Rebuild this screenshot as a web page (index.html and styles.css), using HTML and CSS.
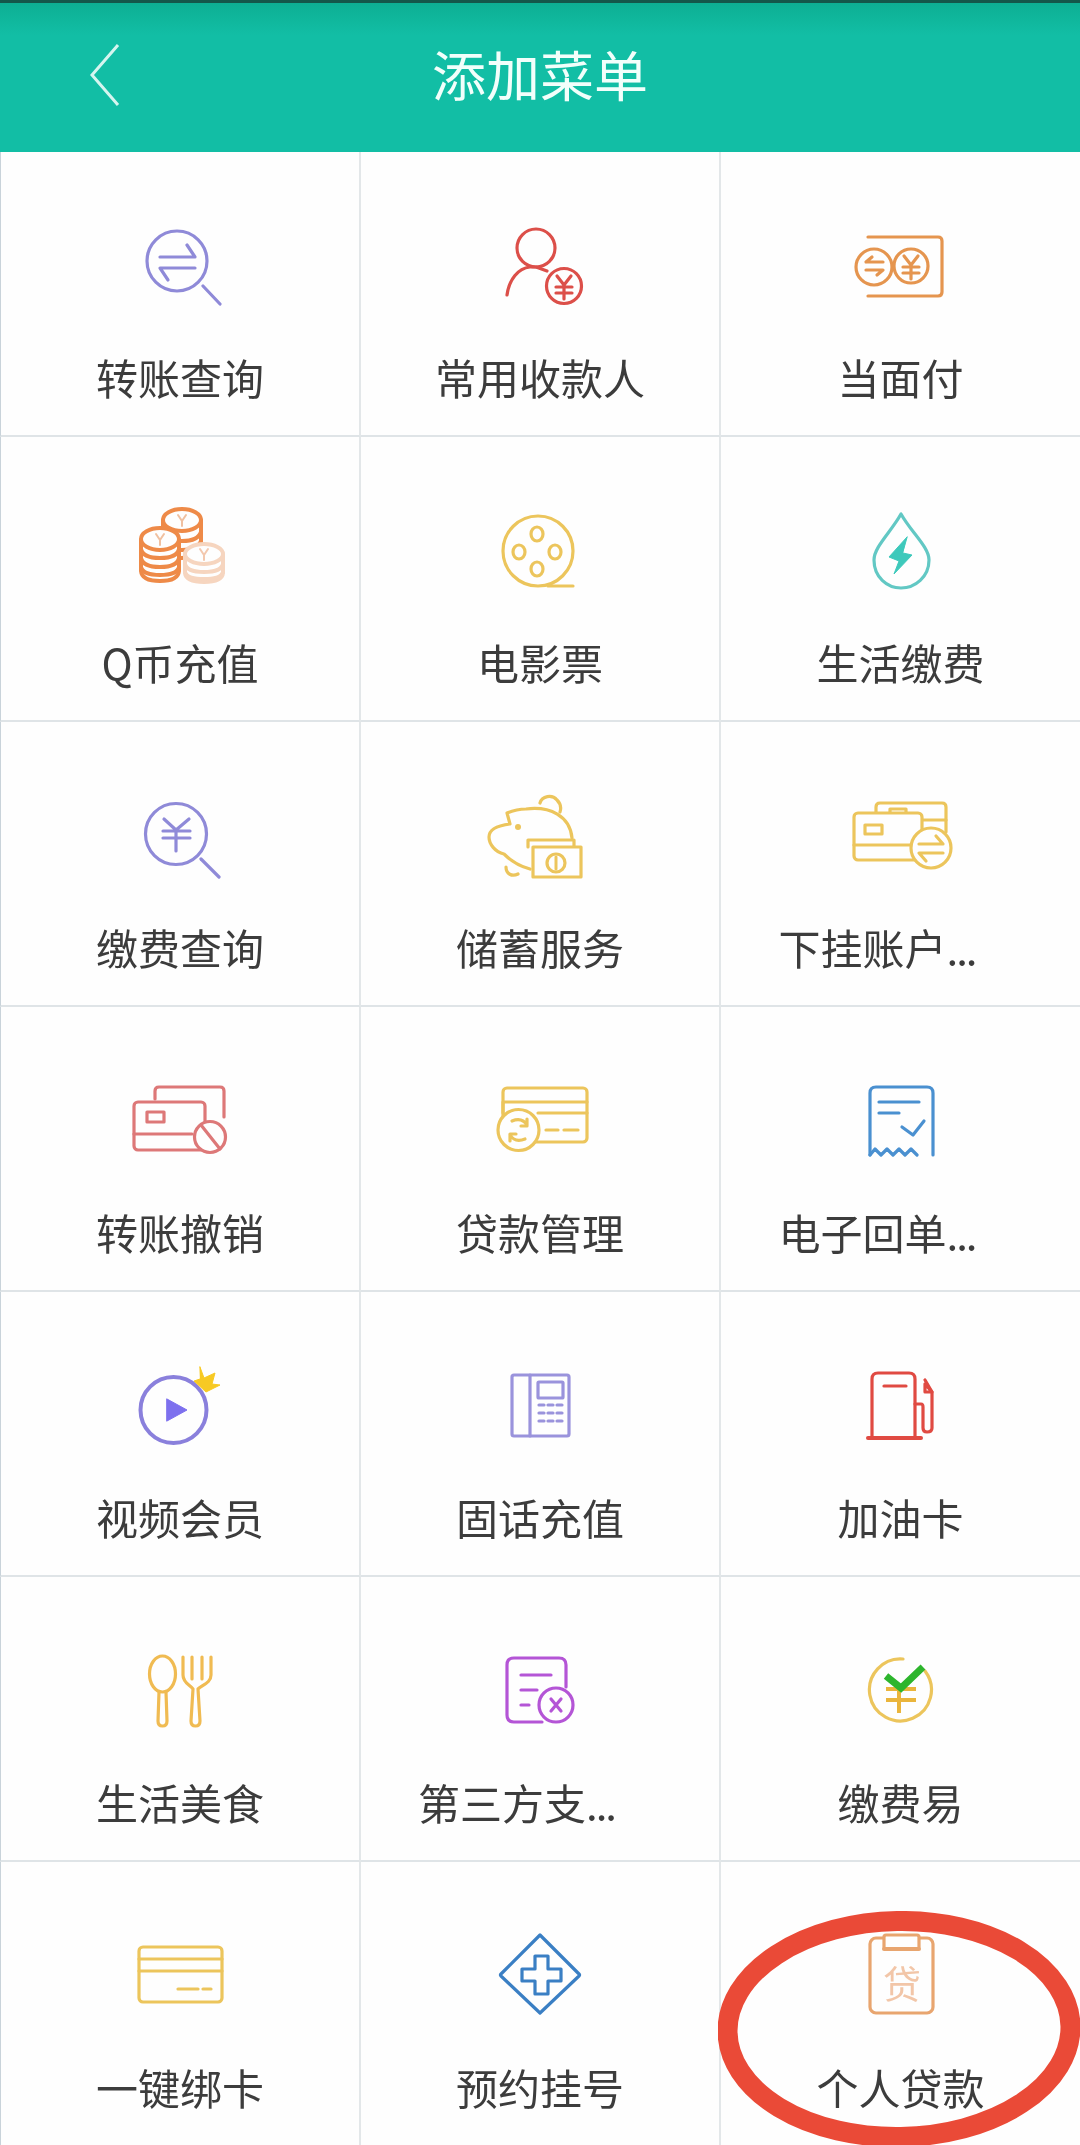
FILE: index.html
```html
<!DOCTYPE html>
<html lang="zh">
<head>
<meta charset="utf-8">
<title>添加菜单</title>
<link rel="stylesheet" href="styles.css">
</head>
<body>
<div class="page">
  <header class="bar">
    <div class="bar-left">
      <svg class="back" viewBox="0 0 30 62"><path d="M28 1 L2 31 L28 61"/></svg>
    </div>
    <h1 class="title">添加菜单</h1>
    <div></div>
  </header>
  <main class="grid">
    <div class="cell">
      <svg class="ic violet" viewBox="0 0 120 110"><circle cx="57" cy="49" r="30"/><path d="M83 74 L100 92"/><path d="M40 45 H75 L67 33"/><path d="M75 56 H40 L48 68"/></svg>
      <div class="label">转账查询</div>
    </div>
    <div class="cell">
      <svg class="ic red" viewBox="0 0 120 110"><circle cx="56" cy="36" r="19"/><path d="M27 83 C29 68 38 56 50 55 H56 L67 59"/><circle cx="84" cy="74" r="17.5"/><path d="M77 64 L84 73 L91 64 M76 75 H92 M76 81 H92 M84 73 V87"/></svg>
      <div class="label">常用收款人</div>
    </div>
    <div class="cell">
      <svg class="ic orange" viewBox="0 0 120 110"><path d="M27 25 H97 Q101 25 101 29 V80 Q101 84 97 84 H27"/><circle class="solid" cx="33" cy="55" r="18"/><circle class="solid" cx="70" cy="54" r="17"/><path d="M25 50 H42 M31 45 L25 50 M25 58 H42 L36 63"/><path d="M63 44 L70 53 L77 44 M62 55 H78 M62 61 H78 M70 53 V67"/></svg>
      <div class="label">当面付</div>
    </div>

    <div class="cell">
      <svg class="ic coin" viewBox="0 0 120 110">
        <path class="thick" d="M43 23 V60 M81 23 V60 M43 35 Q46 44 62 44 Q78 44 81 35 M43 44 Q46 53 62 53 Q78 53 81 44 M50 60 Q66 64 81 54"/>
        <ellipse class="solid thick" cx="62" cy="23" rx="19" ry="11"/>
        <path class="fine" d="M58 18 L62 24 L66 18 M62 24 V29"/>
        <path class="solid thick" d="M21 43 V74 Q22 84 40 84 Q58 84 59 74 V43 Z"/>
        <path class="thick" d="M21 52 Q23 61 40 61 Q57 61 59 52 M21 61 Q23 70 40 70 Q57 70 59 61 M21 70 Q23 78 40 78 Q57 78 59 70"/>
        <ellipse class="solid thick" cx="40" cy="42" rx="19" ry="11"/>
        <path class="fine" d="M36 37 L40 43 L44 37 M40 43 V48"/>
        <g class="pale">
          <path class="solid thick" d="M65 58 V76 Q66 85 84 85 Q102 85 103 76 V58 Z"/>
          <path class="thick" d="M65 67 Q67 75 84 75 Q101 75 103 67 M65 75 Q67 82 84 82 Q101 82 103 75"/>
          <ellipse class="solid thick" cx="84" cy="57" rx="19" ry="10"/>
          <path class="fine" d="M80 52 L84 58 L88 52 M84 58 V63"/>
        </g>
      </svg>
      <div class="label">Q币充值</div>
    </div>
    <div class="cell">
      <svg class="ic gold" viewBox="0 0 120 110"><circle cx="58" cy="54" r="35"/><path d="M68 89 H93"/><ellipse cx="57" cy="37" rx="6" ry="7"/><ellipse cx="39" cy="55" rx="6" ry="7"/><ellipse cx="75" cy="55" rx="6" ry="7"/><ellipse cx="57" cy="72" rx="6" ry="7"/></svg>
      <div class="label">电影票</div>
    </div>
    <div class="cell">
      <svg class="ic teal" viewBox="0 0 120 110"><path d="M60 17 C50 35 33 50 33 63 C33 80 46 91 60 91 C74 91 88 80 88 63 C88 50 70 35 60 17 Z"/><polygon class="bolt" points="66,40 48,60 58,64 53,77 71,58 62,56"/></svg>
      <div class="label">生活缴费</div>
    </div>

    <div class="cell">
      <svg class="ic violet" viewBox="0 0 120 110"><circle cx="56" cy="52" r="30.5"/><path d="M81 77 L99 95"/><path d="M44 37 L56 48 L69 37 M43 49 H70 M43 56 H70 M56 48 V69"/></svg>
      <div class="label">缴费查询</div>
    </div>
    <div class="cell">
      <svg class="ic gold" viewBox="0 0 120 110"><path d="M60 21 C62 14 72 12 77 18 C81 22 81 27 80 30"/><path d="M92 56 C90 34 70 24 46 27 C38 27 32 29 27 31 L30 42 C22 43 9 46 9 55 C9 62 15 70 24 72 C30 78 38 84 50 87"/><path d="M26 85 C26 92 32 95 38 92"/><circle class="dot" cx="38" cy="45" r="3"/><path class="solid" d="M48 65 V58 H94 V65"/><rect class="solid" x="53" y="65" width="48" height="30"/><circle cx="76" cy="81" r="9"/><path class="bolt" d="M76 75 V87"/></svg>
      <div class="label">储蓄服务</div>
    </div>
    <div class="cell">
      <svg class="ic gold" viewBox="0 0 120 110"><path d="M35 31 V25 Q35 21 39 21 H101 Q105 21 105 25 V50"/><path d="M81 38 H105"/><rect x="49" y="27" width="16" height="5"/><rect class="solid" x="13" y="31" width="68" height="47" rx="4"/><rect x="24" y="43" width="17" height="9"/><path d="M13 63 H72"/><circle class="solid" cx="90" cy="66" r="20"/><path d="M78 62 H102 L95 54 M102 71 H78 L85 79"/></svg>
      <div class="label trunc">下挂账户<span class="dots">...</span></div>
    </div>

    <div class="cell">
      <svg class="ic rose" viewBox="0 0 120 110"><path d="M35 32 V24 Q35 20 39 20 H100 Q104 20 104 24 V50"/><rect class="solid" x="14" y="35" width="71" height="48" rx="4"/><rect x="27" y="45" width="17" height="10"/><path d="M14 67 H72"/><circle class="solid" cx="90" cy="70" r="15.5"/><path d="M81 58 L100 82"/></svg>
      <div class="label">转账撤销</div>
    </div>
    <div class="cell">
      <svg class="ic gold" viewBox="0 0 120 110"><rect x="23" y="21" width="84" height="54" rx="4"/><path d="M23 35 H107 M58 46 H107 M23 35 V46"/><circle class="solid" cx="38.5" cy="63" r="20.5"/><path d="M66 63 H78 M84 63 H98"/><path d="M32 54 Q42 50 47 58 M47 52 V59 H41 M45 72 Q35 76 30 68 M30 74 V67 H36"/></svg>
      <div class="label">贷款管理</div>
    </div>
    <div class="cell">
      <svg class="ic blue" viewBox="0 0 120 110"><path d="M29 88 V26 Q29 20 35 20 H86 Q92 20 92 26 V88"/><path d="M29 88 L34 82 L40 88 L46 82 L52 88 L58 82 L64 88 L70 82 L76 88"/><path d="M38 35 H78 M38 46 H58"/><path d="M61 60 L72 68 L83 54"/></svg>
      <div class="label trunc">电子回单<span class="dots">...</span></div>
    </div>

    <div class="cell">
      <svg class="ic purple" viewBox="0 0 120 110"><circle class="wide" cx="53.5" cy="58" r="33"/><polygon class="play" points="47,47 67,58 47,69"/><polygon class="crown" points="80,15 84,26 95,21 92,32 100,33 86,40 74,29 80,27"/></svg>
      <div class="label">视频会员</div>
    </div>
    <div class="cell">
      <svg class="ic lilac" viewBox="0 0 120 110"><rect x="32" y="23" width="57" height="61" rx="2"/><path d="M50 23 V84"/><rect x="58" y="30" width="25" height="16" rx="1"/><path d="M59 53 H64 M68 53 H73 M77 53 H82 M59 61 H64 M68 61 H73 M77 61 H82 M59 69 H64 M68 69 H73 M77 69 H82"/></svg>
      <div class="label">固话充值</div>
    </div>
    <div class="cell">
      <svg class="ic pump" viewBox="0 0 120 110"><path d="M31 86 V27 Q31 21 37 21 H68 Q74 21 74 27 V86"/><path class="wide" d="M27 86 H80"/><path d="M43 34 H65"/><path d="M74 52 H80 Q82 52 82 55 V76 Q82 80 86 80 Q91 80 91 76 V40 L84 28"/><path d="M84 40 L91 40 L84 32 Z"/></svg>
      <div class="label">加油卡</div>
    </div>

    <div class="cell">
      <svg class="ic amber" viewBox="0 0 120 110"><ellipse cx="42.5" cy="37" rx="13" ry="18"/><path d="M39 55 L38 84 Q38 89 42.5 89 Q47 89 47 84 L46 55"/><path d="M63 20 V38 C63 46 70 48 73 52 L71 84 Q71 89 75.5 89 Q80 89 80 84 L78 52 C82 48 91 46 91 38 V20"/><path d="M72 20 V42 M82 20 V42"/></svg>
      <div class="label">生活美食</div>
    </div>
    <div class="cell">
      <svg class="ic magenta" viewBox="0 0 120 110"><path d="M62 85 H34 Q27 85 27 78 V28 Q27 21 34 21 H79 Q86 21 86 28 V50"/><circle cx="76" cy="68" r="17"/><path d="M41 38 H71 M41 53 H57 M41 68 H49"/><path d="M71 62 L81 74 M81 62 L71 74"/></svg>
      <div class="label trunc">第三方支<span class="dots">...</span></div>
    </div>
    <div class="cell">
      <svg class="ic gold" viewBox="0 0 120 110"><path d="M62 22 A31 31 0 1 0 84 34"/><path class="wide2" d="M45 52 H75 M45 63 H75 M58 50 V76"/><path class="tick" d="M45 39 L60 51 L82 30"/></svg>
      <div class="label">缴费易</div>
    </div>

    <div class="cell">
      <svg class="ic gold" viewBox="0 0 120 110"><rect x="19" y="25" width="83" height="55" rx="4"/><path d="M19 37 H102 M19 49 H102"/><path d="M58 67 H78 M83 67 H91"/></svg>
      <div class="label">一键绑卡</div>
    </div>
    <div class="cell">
      <svg class="ic azure" viewBox="0 0 120 110"><path d="M60 13 L99 52 Q100 53 99 54 L60 91 L21 54 Q20 53 21 52 Z"/><path d="M55 34 H68 V47 H81 V59 H68 V72 H55 V59 H42 V47 H55 Z"/></svg>
      <div class="label">预约挂号</div>
    </div>
    <div class="cell last">
      <svg class="ic peach" viewBox="0 0 120 110"><rect x="29" y="16" width="63" height="75" rx="6"/><rect class="solid" x="43" y="13" width="35" height="14" rx="2"/><path class="wide" d="M43 27 H78"/><text class="glyph" x="61" y="76" text-anchor="middle">贷</text></svg>
      <div class="label">个人贷款</div>
      <svg class="ring" viewBox="0 0 362 236"><ellipse cx="181" cy="118" rx="171.5" ry="108" transform="rotate(-1 181 118)"/></svg>
    </div>
  </main>
</div>
</body>
</html>
```

FILE: styles.css
```css
* { box-sizing: border-box; }
html, body { margin: 0; padding: 0; background: #fefefe; }
.page {
  width: 1080px;
  height: 2145px;
  overflow: hidden;
  font-family: "Noto Sans CJK SC", "Noto Sans", sans-serif;
}
.bar {
  height: 152px;
  display: grid;
  grid-template-columns: 1fr auto 1fr;
  align-items: center;
  padding-bottom: 5px;
  border-top: 3px solid #14574a;
  background: linear-gradient(#0daf93, #12bea5 32px);
}
.bar-left { padding-left: 90px; display: flex; }
.back { width: 30px; height: 62px; }
.back path { fill: none; stroke: #d5f5ef; stroke-width: 3; }
.title {
  margin: 0 0 2px;
  font-size: 54px;
  line-height: 70px;
  font-weight: 400;
  color: #f2fffb;
}
.grid {
  display: grid;
  grid-template-columns: 361px 360px 359px;
  grid-auto-rows: 285px;
}
.cell {
  display: flex;
  flex-direction: column;
  align-items: center;
  gap: 25px;
  padding-top: 60px;
  border-right: 2px solid #e3e7e9;
  border-bottom: 2px solid #dfe4e7;
}
.cell:nth-child(3n) { border-right: 0; }
.cell:nth-child(3n+1) { border-left: 1px solid #c9d3da; }
.last { position: relative; }
.label {
  width: 244px;
  height: 60px;
  font-size: 42px;
  line-height: 60px;
  text-align: center;
  white-space: nowrap;
  color: #3c3c3c;
  filter: blur(0.4px);
}
.label.trunc { text-align: left; }
.dots { letter-spacing: -2px; }

.ic { width: 120px; height: 110px; flex: none; filter: blur(0.4px); }
.ic * { fill: none; stroke: currentColor; stroke-width: 3.2; stroke-linecap: round; stroke-linejoin: round; }
.ic .solid { fill: #fefefe; }
.violet { color: #8f8ad8; }
.red { color: #dc4f49; }
.orange { color: #e5954f; }
.coin { color: #ee8a48; }
.coin .thick { stroke-width: 4; }
.coin .fine { stroke: #f0c0a0; stroke-width: 2; }
.coin .pale * { stroke: #f6d5bf; }
.coin .pale .fine { stroke: #f3c8ae; }
.gold { color: #ecc55c; }
.teal { color: #62c8c4; }
.ic .bolt { fill: #3ec9bb; stroke: #3ec9bb; stroke-width: 1; }
.gold .bolt { fill: none; stroke: #ecc55c; stroke-width: 3; }
.ic .dot { fill: #ecc55c; stroke: none; }
.rose { color: #dd7878; }
.blue { color: #4a90d0; }
.purple { color: #8a80dc; }
.ic .wide { stroke-width: 4; }
.ic .play { fill: #7d70ee; stroke: #7d70ee; stroke-width: 1; }
.ic .crown { fill: #f7c923; stroke: #f7c923; stroke-width: 1; }
.lilac { color: #9a93dc; }
.pump { color: #e04a42; }
.amber { color: #f0bb52; }
.magenta { color: #b455d6; }
.ic .wide2 { stroke: #eab53c; stroke-width: 4; stroke-linecap: butt; }
.ic .tick { stroke: #2db52d; stroke-width: 7; stroke-linecap: butt; stroke-linejoin: miter; }
.azure { color: #3a7fc4; }
.peach { color: #e8a56f; }
.ic .glyph {
  font-family: "Noto Sans CJK SC", sans-serif;
  font-size: 38px;
  fill: #f2c6a8;
  stroke: none;
}
.ring {
  position: absolute;
  left: -3px;
  top: 49px;
  width: 362px;
  height: 236px;
}
.ring ellipse { fill: none; stroke: #ea4a37; stroke-width: 20; }
```
